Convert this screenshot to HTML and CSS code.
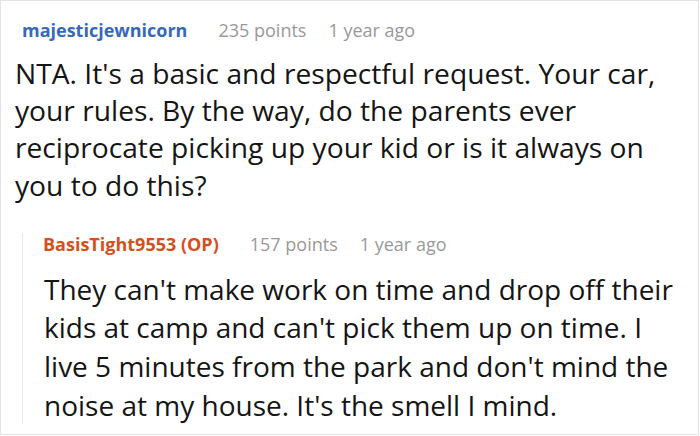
FILE: index.html
```html
<!DOCTYPE html>
<html>
<head>
<meta charset="utf-8">
<link rel="stylesheet" href="styles.css">
</head>
<body>
<div class="card">
  <div class="comment">
    <div class="meta">
      <span class="user">majesticjewnicorn</span>
      <span class="points">235 points</span>
      <span class="time">1 year ago</span>
    </div>
    <p class="text">NTA. It's a basic and respectful request. Your car, your rules. By the way, do the parents ever reciprocate picking up your kid or is it always on you to do this?</p>
  </div>
  <div class="reply">
    <div class="meta meta-reply">
      <span class="user op">BasisTight9553 (OP)</span>
      <span class="points">157 points</span>
      <span class="time">1 year ago</span>
    </div>
    <p class="text text-reply">They can't make work on time and drop off their kids at camp and can't pick them up on time. I live 5 minutes from the park and don't mind the noise at my house. It's the smell I mind.</p>
  </div>
</div>
</body>
</html>
```

FILE: styles.css
```css
html, body {
  margin: 0;
  padding: 0;
  background: #fff;
}
.card {
  box-sizing: border-box;
  width: 699px;
  height: 435px;
  border: 1px solid #e3e3e3;
  font-family: "Open Sans", "Noto Sans", sans-serif;
  color: #151515;
  overflow: hidden;
}
.comment {
  padding: 18px 0 0 21px;
}
.meta {
  display: flex;
  align-items: baseline;
  font-size: 18px;
  line-height: 22px;
  white-space: nowrap;
}
.user {
  font-weight: 700;
  color: #3868b8;
  margin-right: 31px;
}
.user.op {
  color: #d4501c;
}
.points, .time {
  color: #999;
}
.points {
  margin-right: 22px;
}
.text {
  margin: 14px 0 0 -7px;
  width: 672px;
  font-size: 28.2px;
  line-height: 37.2px;
}
.reply {
  margin: 41px 0 0 21px;
  border-left: 1px solid #e8e8e8;
  padding-left: 20px;
}
.meta-reply {
  margin-top: -12px;
}
.text-reply {
  margin: 15px 0 -5px 1px;
  width: 641px;
  font-size: 28px;
  line-height: 38.6px;
}
```
